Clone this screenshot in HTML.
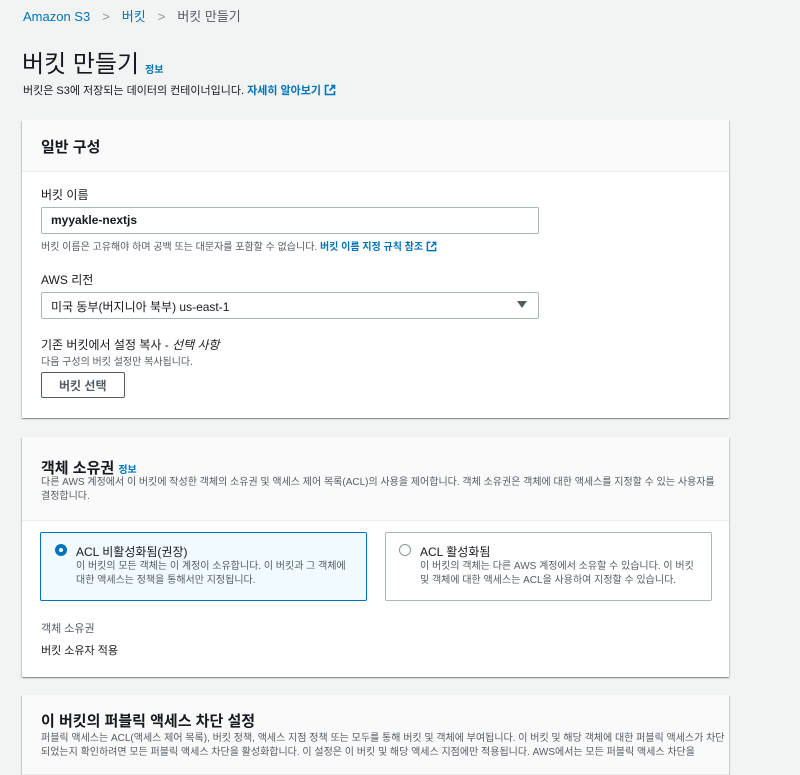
<!DOCTYPE html>
<html><head><meta charset="utf-8"><style>
*{box-sizing:border-box;margin:0;padding:0}
body{width:800px;height:758px;overflow:hidden;background:#f2f3f3;font-family:"Liberation Sans","Noto Sans CJK KR",sans-serif;color:#16191f;position:relative}
.a{position:absolute;white-space:nowrap}
.link{color:#0073bb}
.card{position:absolute;left:22px;width:707px;background:#fff;box-shadow:0 1px 1px rgba(0,28,36,.3),1px 1px 1px rgba(0,28,36,.15),-1px 1px 1px rgba(0,28,36,.15)}
.hd{position:absolute;left:0;top:0;width:100%;background:#fafafa;border-bottom:1px solid #eaeded}
.box{position:absolute;border:1px solid #aab7b8;border-radius:2px;background:#fff}
.s{font-size:10px;color:#545b64}
</style></head><body>
<div class="a" style="left:23px;top:6px;font-size:13px"><span class="link" style="color:#0073bb">Amazon S3</span><span style="color:#879596;margin:0 12px">&gt;</span><span class="link">버킷</span><span style="color:#879596;margin:0 12px">&gt;</span><span style="color:#545b64">버킷 만들기</span></div>
<div class="a" style="left:22px;top:44px;font-size:24px">버킷 만들기</div>
<div class="a link" style="left:145px;top:61px;font-size:10px;font-weight:bold">정보</div>
<div class="a" style="left:23px;top:82px;font-size:11px">버킷은 S3에 저장되는 데이터의 컨테이너입니다. <b class="link">자세히 알아보기</b> <svg width="12" height="12" viewBox="0 0 12 12" style="vertical-align:-2px"><path d="M5 1.5H1.5v9h9V7M7 1.5h3.5V5M10.5 1.5 5.5 6.5" fill="none" stroke="#0073bb" stroke-width="1.6"/></svg></div>

<div class="card" style="top:120px;height:298px">
 <div class="hd" style="height:52px"></div>
 <div class="a" style="left:19px;top:16px;font-size:15px;font-weight:bold">일반 구성</div>
 <div class="a" style="left:19px;top:66px;font-size:12px">버킷 이름</div>
 <div class="box" style="left:19px;top:87px;width:498px;height:27px"></div>
 <div class="a" style="left:29px;top:93px;font-size:12px;font-weight:bold;color:#16191f">myyakle-nextjs</div>
 <div class="a s" style="left:19px;top:118px">버킷 이름은 고유해야 하며 공백 또는 대문자를 포함할 수 없습니다. <b class="link">버킷 이름 지정 규칙 참조</b> <svg width="11" height="11" viewBox="0 0 12 12" style="vertical-align:-2px"><path d="M5 1.5H1.5v9h9V7M7 1.5h3.5V5M10.5 1.5 5.5 6.5" fill="none" stroke="#0073bb" stroke-width="1.6"/></svg></div>
 <div class="a" style="left:19px;top:151px;font-size:12px">AWS 리전</div>
 <div class="box" style="left:19px;top:172px;width:498px;height:27px"></div>
 <div class="a" style="left:29px;top:178px;font-size:12px">미국 동부(버지니아 북부) us-east-1</div>
 <div class="a" style="left:495px;top:181px;width:0;height:0;border-left:5px solid transparent;border-right:5px solid transparent;border-top:7px solid #545b64"></div>
 <div class="a" style="left:19px;top:216px;font-size:12px">기존 버킷에서 설정 복사 - <i>선택 사항</i></div>
 <div class="a s" style="left:19px;top:233px">다음 구성의 버킷 설정만 복사됩니다.</div>
 <div class="box" style="left:19px;top:252px;width:84px;height:26px;border-color:#545b64"></div>
 <div class="a" style="left:37px;top:257px;font-size:12px;font-weight:bold;color:#545b64">버킷 선택</div>
</div>

<div class="card" style="top:437px;height:240px">
 <div class="hd" style="height:84px"></div>
 <div class="a" style="left:19px;top:20px;font-size:15px;font-weight:bold">객체 소유권 <span class="link" style="font-size:10px">정보</span></div>
 <div class="a s" style="left:19px;top:39px;white-space:normal;width:680px;line-height:14px">다른 AWS 계정에서 이 버킷에 작성한 객체의 소유권 및 액세스 제어 목록(ACL)의 사용을 제어합니다. 객체 소유권은 객체에 대한 액세스를 지정할 수 있는 사용자를 결정합니다.</div>
 <div class="box" style="left:18px;top:95px;width:327px;height:69px;background:#f1faff;border-color:#0073bb"></div>
 <div class="a" style="left:33px;top:107px;width:12px;height:12px;border-radius:50%;border:4px solid #0073bb;background:#fff"></div>
 <div class="a" style="left:54px;top:106px;font-size:12px">ACL 비활성화됨(권장)</div>
 <div class="a s" style="left:54px;top:123px;line-height:14px">이 버킷의 모든 객체는 이 계정이 소유합니다. 이 버킷과 그 객체에<br>대한 액세스는 정책을 통해서만 지정됩니다.</div>
 <div class="box" style="left:363px;top:95px;width:327px;height:69px"></div>
 <div class="a" style="left:377px;top:107px;width:12px;height:12px;border-radius:50%;border:1px solid #879596;background:#fff"></div>
 <div class="a" style="left:398px;top:106px;font-size:12px">ACL 활성화됨</div>
 <div class="a s" style="left:398px;top:123px;line-height:14px">이 버킷의 객체는 다른 AWS 계정에서 소유할 수 있습니다. 이 버킷<br>및 객체에 대한 액세스는 ACL을 사용하여 지정할 수 있습니다.</div>
 <div class="a" style="left:19px;top:183px;font-size:11px;color:#545b64">객체 소유권</div>
 <div class="a" style="left:19px;top:205px;font-size:11px">버킷 소유자 적용</div>
</div>

<div class="card" style="top:695px;height:80px">
 <div class="hd" style="height:80px"></div>
 <div class="a" style="left:19px;top:15px;font-size:15px;font-weight:bold">이 버킷의 퍼블릭 액세스 차단 설정</div>
 <div class="a s" style="left:19px;top:37px;white-space:normal;width:690px;line-height:14px">퍼블릭 액세스는 ACL(액세스 제어 목록), 버킷 정책, 액세스 지점 정책 또는 모두를 통해 버킷 및 객체에 부여됩니다. 이 버킷 및 해당 객체에 대한 퍼블릭 액세스가 차단되었는지 확인하려면 모든 퍼블릭 액세스 차단을 활성화합니다. 이 설정은 이 버킷 및 해당 액세스 지점에만 적용됩니다. AWS에서는 모든 퍼블릭 액세스 차단을</div>
</div>
</body></html>
